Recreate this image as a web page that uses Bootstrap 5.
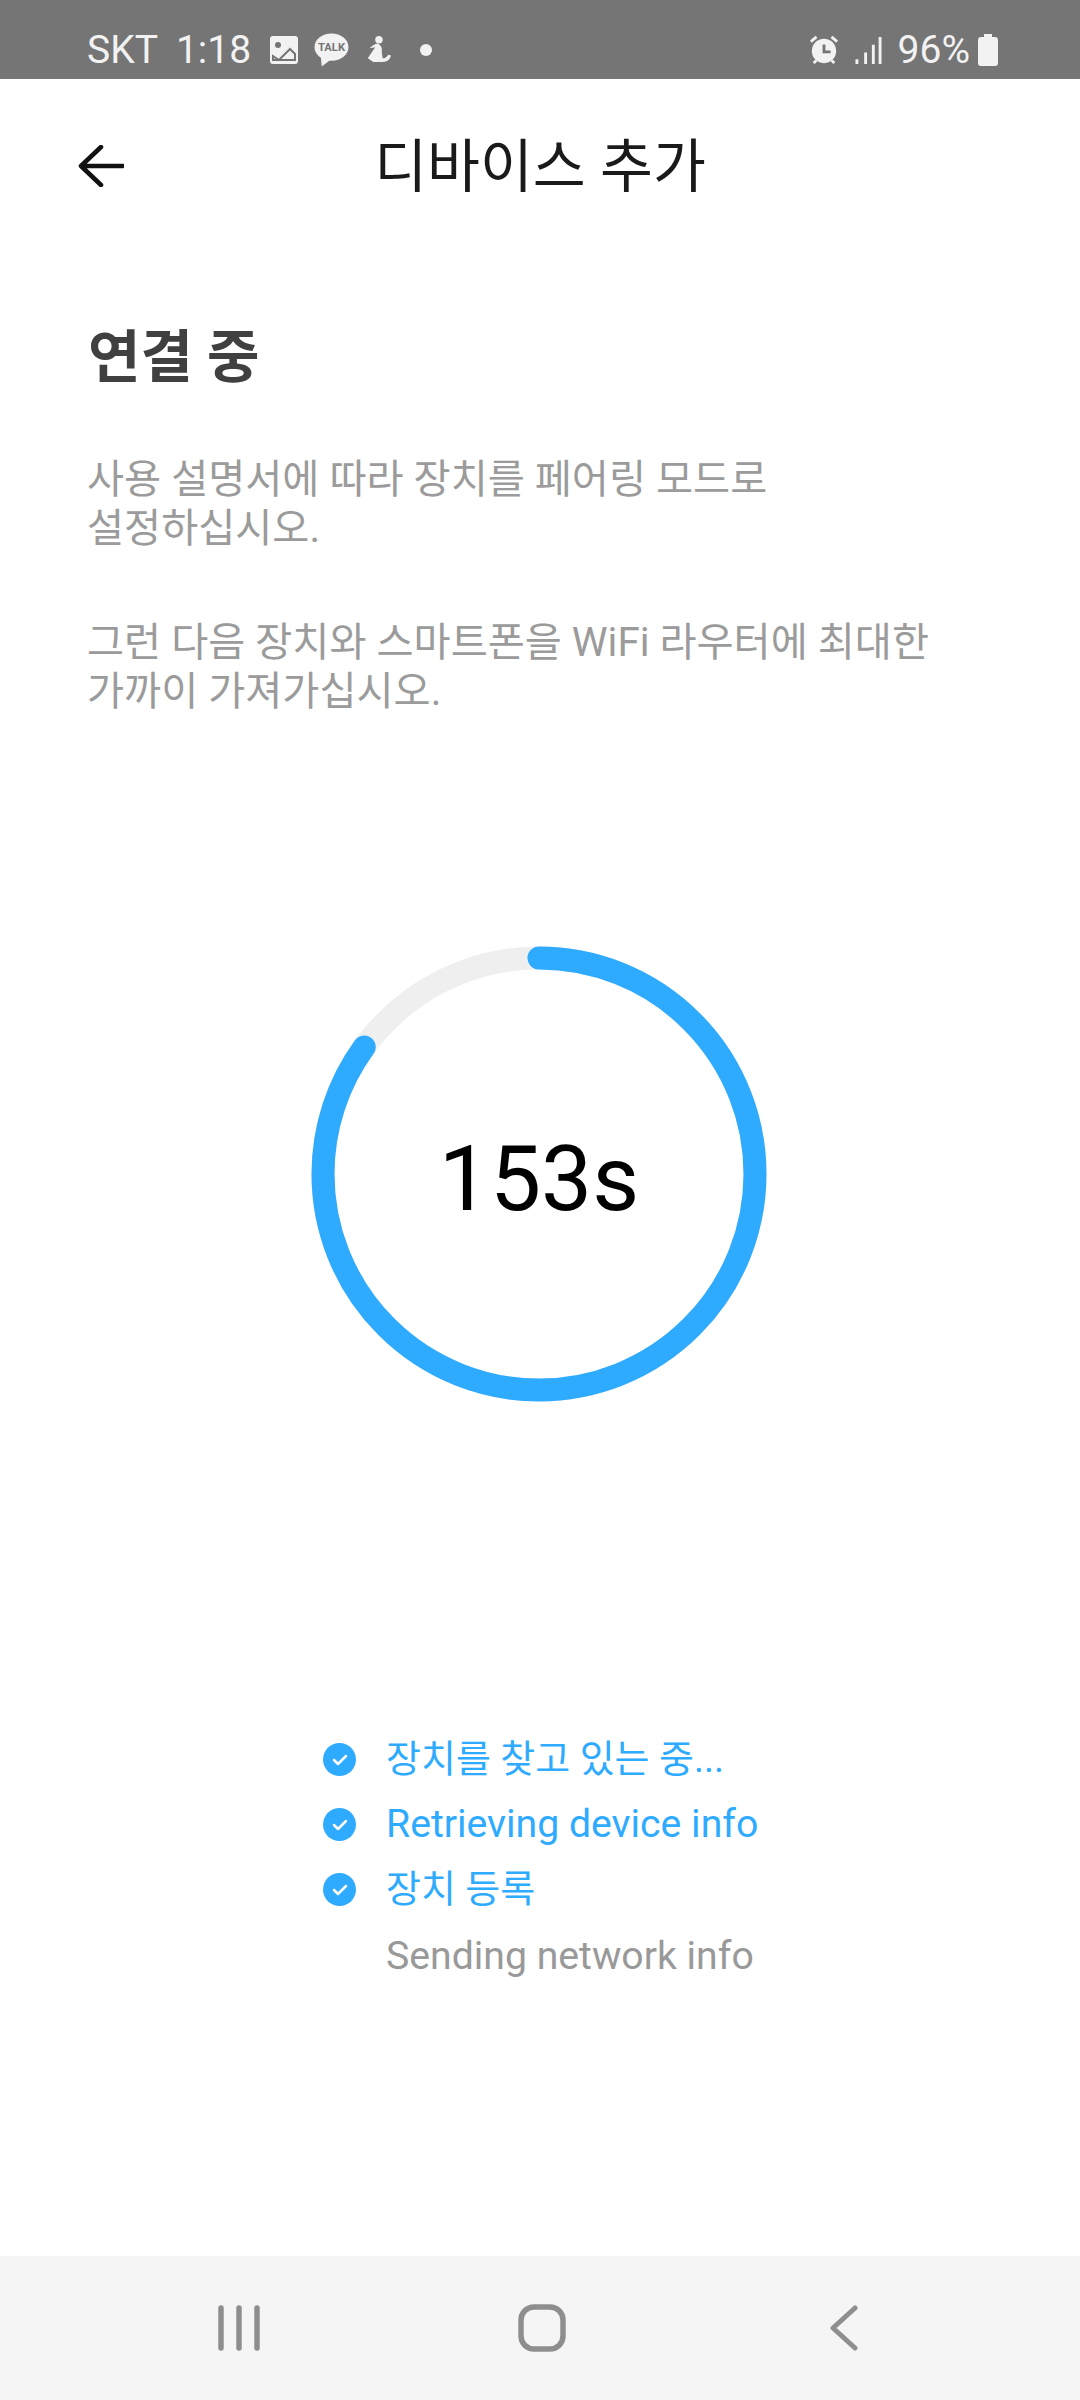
<!DOCTYPE html>
<html lang="ko">
<head>
    <meta charset="UTF-8">
    <meta name="viewport" content="width=device-width, initial-scale=1.0">
    <title>디바이스 추가</title>
    <link rel="stylesheet" href="https://cdn.jsdelivr.net/npm/bootstrap@5.3.0/dist/css/bootstrap.min.css">
    <style>
        html, body { height: 2400px; overflow: hidden; }
        body { font-family: Roboto, "Noto Sans CJK KR", sans-serif; background: #fff; width: 1080px; }
        .screen { height: 2400px; }
        .status-row { height: 79px; background: #757575; color: #f2f2f2; padding: 26px 0 0 87px; font-size: 39px; line-height: 48px; }
        .status-time { margin-left: 18px; margin-right: 19px; }
        .status-right { margin-left: auto; margin-right: 82px; }
        .status-dot { margin-left: 13px; }
        .app-head { height: 174px; padding-left: 78px; }
        .head-title { flex: 1; margin: 0 124px 0 0; padding-top: 4px; text-align: center; font-size: 57.500px; color: #1a1a1a; font-weight: 400; line-height: 70px; }
        .main-title { font-size: 57px; font-weight: 700; color: #404040; margin: 70px 0 0 88px; line-height: 70px; }
        .guide { margin: 62px 0 0 87px; font-size: 40.300px; line-height: 49px; color: #9b9b9b; }
        .guide p { margin: 0 0 65px; }
        .ring-wrap { width: 456px; height: 456px; margin: 165px 0 0 311px; }
        .ring-wrap svg { display: block; }
        .ring-text { font-size: 91px; color: #000; line-height: 456px; padding-top: 5px; }
        .steps { margin: 325px 0 0 323px; font-size: 39.200px; line-height: 65px; color: #2eabff; }
        .steps .step-off { color: #999; padding-left: 63px; padding-top: 2px; }
        .step-row { gap: 30px; }
        .step-ko { font-size: 38px; }
        .nav-row { height: 144px; margin-top: auto; background: #f5f5f5; padding: 0 213px 0 216px; }
    </style>
</head>
<body>
<div class="screen d-flex flex-column">
    <div class="status-row d-flex align-items-start">
        <span>SKT</span>
        <span class="status-time">1:18</span>
        <div class="d-flex align-items-center gap-3" style="height:48px">
            <svg width="28" height="28" viewBox="0 0 28 28"><rect width="28" height="28" rx="3" fill="#f2f2f2"/><circle cx="8" cy="9" r="3" fill="#757575"/><path d="M3 24v-4l6 4 11-11 5 5v6z" fill="none" stroke="#757575" stroke-width="2"/></svg>
            <svg width="35" height="34" viewBox="0 0 36 34"><ellipse cx="18" cy="14" rx="17.500" ry="14" fill="#f2f2f2"/><path d="M7 24l1 10 9-7z" fill="#f2f2f2"/><text x="18" y="18.500" text-anchor="middle" font-family="Roboto" font-size="11.500" font-weight="700" fill="#757575">TALK</text></svg>
            <svg width="26" height="30" viewBox="0 0 28 32"><circle cx="15" cy="5" r="4" fill="#f2f2f2"/><path d="M13 9c-3 1-6 3-8 5l6-1-8 12 6 4h10c5 0 8-3 9-7l-3-1c-1 2-3 4-6 4l-1-7c1-4-1-8-5-9z" fill="#f2f2f2"/></svg>
            <svg class="status-dot" width="12" height="12" viewBox="0 0 12 12"><circle cx="6" cy="6" r="6" fill="#f2f2f2"/></svg>
        </div>
        <div class="status-right d-flex align-items-center" style="height:48px">
            <svg width="30" height="30" viewBox="0 0 32 32"><circle cx="16" cy="17" r="13" fill="#f2f2f2"/><path d="M16 10v8h7" fill="none" stroke="#757575" stroke-width="3"/><path d="M2 7l6-5M30 7l-6-5M5 30l3-3M27 30l-3-3" stroke="#f2f2f2" stroke-width="3"/></svg>
            <svg class="ms-3" width="27" height="29" viewBox="0 0 28 30"><path d="M2 24v5M11 17v12M19 9v20M26 1v28" stroke="#f2f2f2" stroke-width="3"/></svg>
            <span class="ms-3">96%</span>
            <svg class="ms-2" width="20" height="32" viewBox="0 0 20 32"><path d="M6 0h8v3h3a3 3 0 0 1 3 3v23a3 3 0 0 1-3 3H3a3 3 0 0 1-3-3V6a3 3 0 0 1 3-3h3z" fill="#f2f2f2"/></svg>
        </div>
    </div>

    <div class="app-head d-flex align-items-center">
        <svg width="46" height="42" viewBox="0 0 46 42"><path d="M23 2L3 21l20 19M3 21h42" fill="none" stroke="#111" stroke-width="4.500" stroke-linecap="round" stroke-linejoin="round"/></svg>
        <h1 class="head-title">디바이스 추가</h1>
    </div>

    <h2 class="main-title">연결 중</h2>

    <div class="guide">
        <p>사용 설명서에 따라 장치를 페어링 모드로<br>설정하십시오.</p>
        <p>그런 다음 장치와 스마트폰을 WiFi 라우터에 최대한<br>가까이 가져가십시오.</p>
    </div>

    <div class="ring-wrap position-relative">
        <svg width="456" height="456" viewBox="0 0 456 456">
            <circle cx="228" cy="228" r="216" fill="none" stroke="#efefef" stroke-width="23"/>
            <circle cx="228" cy="228" r="216" fill="none" stroke="#2eabff" stroke-width="23" stroke-linecap="round" pathLength="100" stroke-dasharray="85 100" transform="rotate(-90 228 228)"/>
        </svg>
        <div class="ring-text position-absolute top-0 start-0 w-100 text-center">153s</div>
    </div>

    <div class="steps">
        <div class="step-row d-flex align-items-center">
            <svg width="33" height="33" viewBox="0 0 33 33"><circle cx="16.500" cy="16.500" r="16.500" fill="#2eabff"/><path d="M11 17l4 4 8-8" fill="none" stroke="#fff" stroke-width="2.500" stroke-linecap="round" stroke-linejoin="round"/></svg>
            <span class="step-ko">장치를 찾고 있는 중...</span>
        </div>
        <div class="step-row d-flex align-items-center">
            <svg width="33" height="33" viewBox="0 0 33 33"><circle cx="16.500" cy="16.500" r="16.500" fill="#2eabff"/><path d="M11 17l4 4 8-8" fill="none" stroke="#fff" stroke-width="2.500" stroke-linecap="round" stroke-linejoin="round"/></svg>
            <span>Retrieving device info</span>
        </div>
        <div class="step-row d-flex align-items-center">
            <svg width="33" height="33" viewBox="0 0 33 33"><circle cx="16.500" cy="16.500" r="16.500" fill="#2eabff"/><path d="M11 17l4 4 8-8" fill="none" stroke="#fff" stroke-width="2.500" stroke-linecap="round" stroke-linejoin="round"/></svg>
            <span class="step-ko">장치 등록</span>
        </div>
        <div class="step-off">Sending network info</div>
    </div>

    <div class="nav-row d-flex align-items-center justify-content-between">
        <svg width="46" height="46" viewBox="0 0 46 46"><path d="M5 3v40M23 3v40M41 3v40" stroke="#8e8e8e" stroke-width="5.500" stroke-linecap="round"/></svg>
        <svg width="48" height="48" viewBox="0 0 48 48"><rect x="3" y="3" width="42" height="42" rx="13" fill="none" stroke="#8e8e8e" stroke-width="5.500"/></svg>
        <svg width="46" height="46" viewBox="0 0 46 46"><path d="M34 3L12 23l22 20" fill="none" stroke="#8e8e8e" stroke-width="5" stroke-linecap="round" stroke-linejoin="round"/></svg>
    </div>
</div>
</body>
</html>
